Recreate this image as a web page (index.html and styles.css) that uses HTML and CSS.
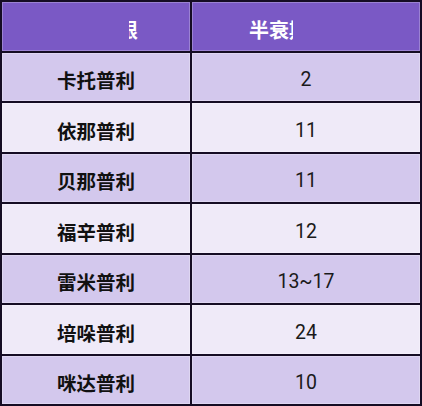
FILE: index.html
```html
<!DOCTYPE html>
<html lang="zh">
<head>
<meta charset="utf-8">
<link rel="stylesheet" href="styles.css">
</head>
<body>
<div class="table">
  <div class="cell head head-left"><span class="clip-right"><span class="clip-inner">限</span></span></div>
  <div class="cell head head-right">半衰<span class="clip-left">期</span></div>

  <div class="cell name odd">卡托普利</div><div class="cell val odd">2</div>
  <div class="cell name even">依那普利</div><div class="cell val even">11</div>
  <div class="cell name odd">贝那普利</div><div class="cell val odd">11</div>
  <div class="cell name even">福辛普利</div><div class="cell val even">12</div>
  <div class="cell name odd">雷米普利</div><div class="cell val odd">13~17</div>
  <div class="cell name even">培哚普利</div><div class="cell val even">24</div>
  <div class="cell name odd">咪达普利</div><div class="cell val odd">10</div>
</div>
</body>
</html>
```

FILE: styles.css
```css
html, body {
  margin: 0;
  padding: 0;
  background: #ffffff;
}

.table {
  box-sizing: border-box;
  width: 422px;
  height: 406px;
  display: grid;
  grid-template-columns: 188px 1fr;
  grid-template-rows: repeat(8, 1fr);
  gap: 2px;
  border: 2px solid #150c24;
  background: #150c24;
  font-family: "Noto Sans CJK SC", "Noto Sans", sans-serif;
}

.cell {
  box-sizing: border-box;
  display: flex;
  align-items: center;
  justify-content: center;
  padding-top: 6px;
  font-size: 19.5px;
  color: #111111;
  box-shadow: inset 0 0 0 1px rgba(255, 255, 255, 0.25);
  white-space: nowrap;
}

.head {
  background: #7a59c5;
  color: #ffffff;
  font-weight: 700;
  font-size: 20px;
  justify-content: flex-start;
}

.head-left {
  padding-left: 127px;
}

.head-right {
  padding-left: 57px;
}

.clip-right {
  display: inline-block;
  width: 9px;
  overflow: hidden;
}

.clip-inner {
  display: inline-block;
  margin-left: -11px;
}

.clip-left {
  display: inline-block;
  width: 4px;
  overflow: hidden;
}

.name {
  font-weight: 700;
}

.val {
  font-family: Roboto, "Noto Sans", sans-serif;
  font-weight: 400;
  font-size: 19.5px;
  color: #1a1a1a;
}

.odd {
  background: #d3c8ed;
}

.even {
  background: #efeaf8;
}
```
